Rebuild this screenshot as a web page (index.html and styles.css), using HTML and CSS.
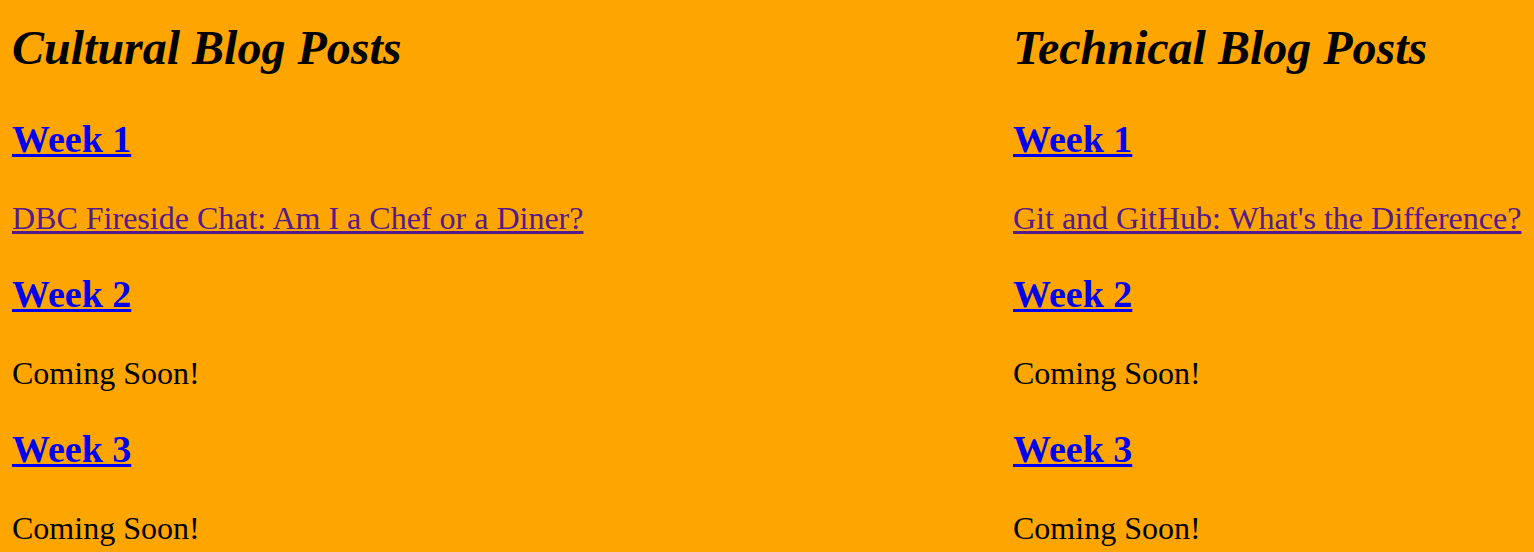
FILE: index.html
```html
<!DOCTYPE html>
<html lang="en">
<head>
<meta charset="utf-8">
<title>Blog Posts</title>
<link rel="stylesheet" href="styles.css">
</head>
<body>
<main class="page">
  <section class="column">
    <h1 class="title">Cultural Blog Posts</h1>
    <h2 class="week"><a class="week-link" href="#c1">Week 1</a></h2>
    <p class="entry"><a class="post-link" href="#c1p">DBC Fireside Chat: Am I a Chef or a Diner?</a></p>
    <h2 class="week"><a class="week-link" href="#c2">Week 2</a></h2>
    <p class="entry">Coming Soon!</p>
    <h2 class="week"><a class="week-link" href="#c3">Week 3</a></h2>
    <p class="entry">Coming Soon!</p>
  </section>
  <section class="column">
    <h1 class="title">Technical Blog Posts</h1>
    <h2 class="week"><a class="week-link" href="#t1">Week 1</a></h2>
    <p class="entry"><a class="post-link" href="#t1p">Git and GitHub: What's the Difference?</a></p>
    <h2 class="week"><a class="week-link" href="#t2">Week 2</a></h2>
    <p class="entry">Coming Soon!</p>
    <h2 class="week"><a class="week-link" href="#t3">Week 3</a></h2>
    <p class="entry">Coming Soon!</p>
  </section>
</main>
</body>
</html>
```

FILE: styles.css
```css
html, body {
  margin: 0;
  padding: 0;
  background: #ffa500;
  height: 100%;
  overflow: hidden;
}

body {
  font-family: "Liberation Serif", "Times New Roman", serif;
  color: #000;
}

.page {
  display: grid;
  grid-template-columns: 1001px 1fr;
  padding: 20px 0 0 12px;
}

.column {
  display: flex;
  flex-direction: column;
  align-items: flex-start;
  white-space: nowrap;
}

.title {
  margin: 0 0 43px 0;
  font-size: 48px;
  line-height: 55px;
  font-style: italic;
  font-weight: bold;
}

.week {
  margin: 0 0 39px 0;
  font-size: 38px;
  line-height: 43px;
  font-weight: bold;
}

.entry {
  margin: 0 0 36px 0;
  font-size: 32px;
  line-height: 37px;
}

.week-link {
  color: #0000ee;
}

.post-link {
  color: #551a8b;
}
```
